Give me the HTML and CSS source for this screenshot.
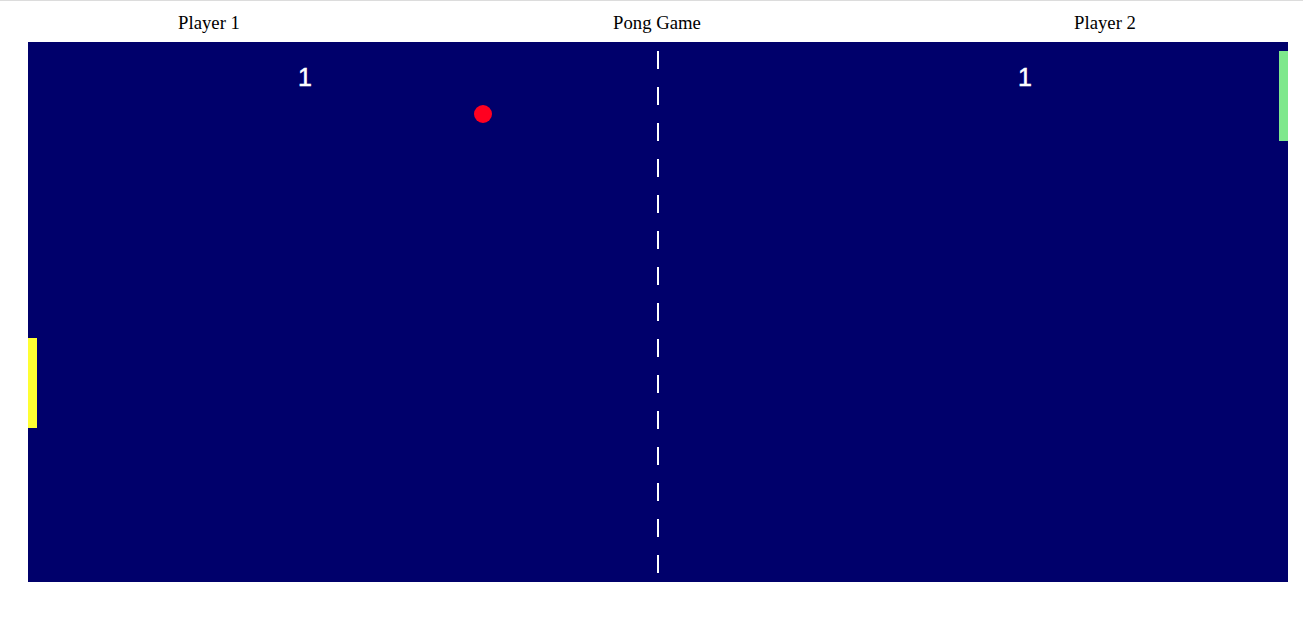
FILE: index.html
```html
<!DOCTYPE html>
<html>
<head>
<meta charset="utf-8">
<title>Pong Game</title>
<link rel="stylesheet" href="styles.css">
</head>
<body>
<div class="page">
  <header class="labels">
    <div class="label">Player 1</div>
    <div class="label">Pong Game</div>
    <div class="label">Player 2</div>
  </header>
  <div class="court">
    <div class="net"></div>
    <div class="score score-left">1</div>
    <div class="score score-right">1</div>
    <div class="ball" style="left: 446px; top: 63px;"></div>
    <div class="paddle paddle-left" style="top: 296px;"></div>
    <div class="paddle paddle-right" style="top: 9px;"></div>
  </div>
</div>
</body>
</html>
```

FILE: styles.css
```css
html, body {
  margin: 0;
  padding: 0;
  background: #ffffff;
}

body {
  border-top: 1px solid #dcdcdc;
  font-family: "Liberation Serif", "Times New Roman", serif;
}

.page {
  padding: 0 0 0 28px;
}

.labels {
  display: grid;
  grid-template-columns: repeat(3, 362px);
  column-gap: 86px;
  justify-items: center;
  padding-top: 11px;
  height: 30px;
  font-size: 18.72px;
  line-height: 21px;
  color: #000;
}

.court {
  position: relative;
  width: 1260px;
  height: 540px;
  background: #00006b;
  overflow: hidden;
}

.net {
  position: absolute;
  left: 629px;
  top: 9px;
  width: 2px;
  height: 522px;
  background: repeating-linear-gradient(to bottom, #ffffff 0, #ffffff 18px, transparent 18px, transparent 36px);
}

.score {
  position: absolute;
  top: 20px;
  font-family: "Liberation Sans", Arial, Helvetica, sans-serif;
  font-size: 25px;
  line-height: 30px;
  color: #ffffff;
  -webkit-text-stroke: 0.5px #ffffff;
}

.score-left {
  left: 270px;
}

.score-right {
  left: 990px;
}

.ball {
  position: absolute;
  width: 18px;
  height: 18px;
  border-radius: 50%;
  background: #ff0020;
}

.paddle {
  position: absolute;
  width: 9px;
  height: 90px;
}

.paddle-left {
  left: 0;
  background: #ffff33;
}

.paddle-right {
  right: 0;
  background: #7ee88c;
}
```
